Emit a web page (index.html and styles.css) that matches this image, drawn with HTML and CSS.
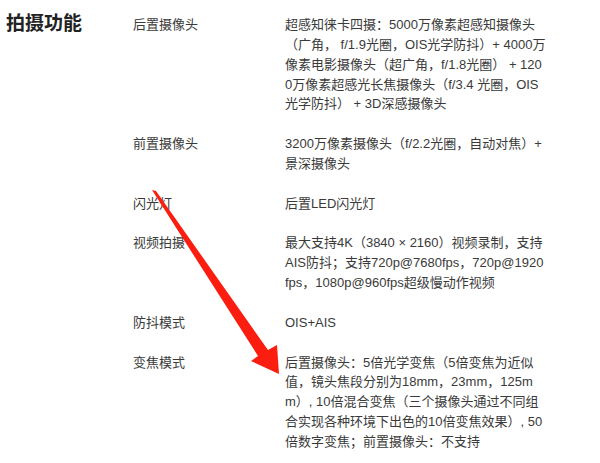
FILE: index.html
```html
<!DOCTYPE html>
<html lang="zh-CN">
<head>
    <meta charset="UTF-8">
    <title>拍摄功能</title>
    <link rel="stylesheet" href="styles.css">
</head>
<body>
    <div class="spec">
        <h2 class="spec-title">拍摄功能</h2>
        <dl class="spec-table">
            <dt>后置摄像头</dt>
            <dd>超感知徕卡四摄：5000万像素超感知摄像头<br>（广角， f/1.9光圈，OIS光学防抖）+ 4000万<br>像素电影摄像头（超广角，f/1.8光圈） + 120<br>0万像素超感光长焦摄像头（f/3.4 光圈，OIS<br>光学防抖） + 3D深感摄像头</dd>

            <dt>前置摄像头</dt>
            <dd>3200万像素摄像头（f/2.2光圈，自动对焦）+<br>景深摄像头</dd>

            <dt>闪光灯</dt>
            <dd>后置LED闪光灯</dd>

            <dt>视频拍摄</dt>
            <dd>最大支持4K（3840 × 2160）视频录制，支持<br>AIS防抖；支持720p@7680fps，720p@1920<br>fps，1080p@960fps超级慢动作视频</dd>

            <dt>防抖模式</dt>
            <dd>OIS+AIS</dd>

            <dt>变焦模式</dt>
            <dd>后置摄像头：5倍光学变焦（5倍变焦为近似<br>值，镜头焦段分别为18mm，23mm，125m<br>m）, 10倍混合变焦（三个摄像头通过不同组<br>合实现各种环境下出色的10倍变焦效果）, 50<br>倍数字变焦；前置摄像头：不支持</dd>
        </dl>
    </div>

    <!-- red annotation arrow drawn over the table -->
    <svg class="arrow" width="600" height="463" viewBox="0 0 600 463">
        <polygon points="152,190 156,191 268,350 277,345 279,374 251,361 258,356" fill="#fb1d10"/>
    </svg>
</body>
</html>
```

FILE: styles.css
```css
body {
    margin: 0;
    background: #fff;
    color: #3a3a3a;
    font-family: "Liberation Sans", Arial, "Noto Sans CJK SC", sans-serif;
    font-size: 13px;
    line-height: 19.86px;
    position: relative;
}

.spec {
    display: flex;
    align-items: flex-start;
}

/* Section heading on the left */
.spec-title {
    width: 127px;
    margin: 0;
    padding: 14px 0 0 6px;
    font-size: 19px;
    line-height: 20px;
    font-weight: bold;
    color: #222;
}

/* Label / value pairs */
.spec-table {
    display: grid;
    grid-template-columns: 152px 300px;
    margin: 15px 0 0 0;
}

.spec-table dt,
.spec-table dd {
    margin: 0;
    padding-bottom: 19.86px;
}

.arrow {
    position: absolute;
    top: 0;
    left: 0;
    pointer-events: none;
}
```
